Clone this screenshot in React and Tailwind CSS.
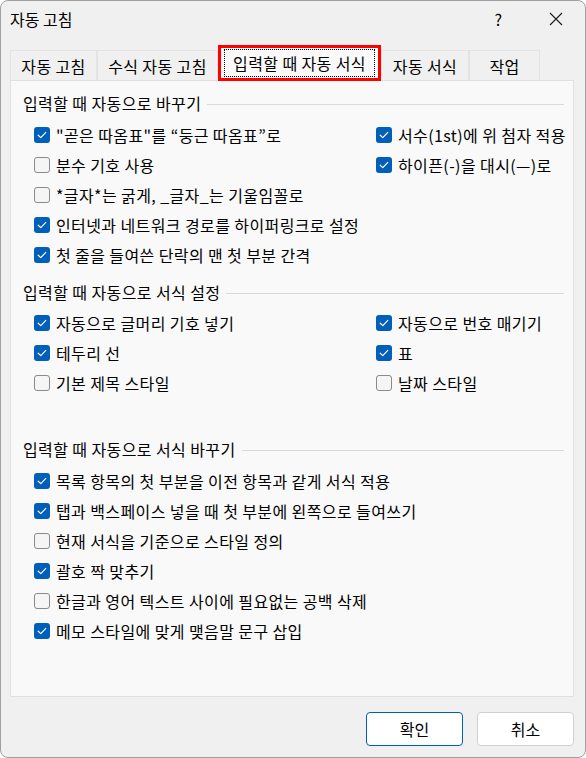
import React from 'react';

const FONT = "font-['Malgun_Gothic','Noto_Sans_CJK_KR',sans-serif]";
const TXT = 'text-[16px] leading-none text-black whitespace-nowrap tracking-[0.4px]';

function Box({ checked }) {
  if (checked) {
    return (
      <span className="w-[16px] h-[16px] rounded-[3px] bg-[#005fb8] flex items-center justify-center shrink-0">
        <svg width="10" height="8" viewBox="0 0 10 8" fill="none">
          <path d="M1.2 4.2 L3.8 6.6 L8.8 1.4" stroke="#ffffff" strokeWidth="1.2" strokeLinecap="round" strokeLinejoin="round" />
        </svg>
      </span>
    );
  }
  return <span className="w-[16px] h-[16px] rounded-[3px] border border-[#8a8a8a] bg-[#f5f5f5] shrink-0" />;
}

function Check({ label, checked, className = '' }) {
  return (
    <div className={`flex items-center gap-[6px] ${className}`}>
      <Box checked={checked} />
      <span className={TXT}>{label}</span>
    </div>
  );
}

function Row({ left, right }) {
  return (
    <div className="flex items-center pl-[23px] h-[30px]">
      <Check label={left[0]} checked={left[1]} className="w-[342px]" />
      {right && <Check label={right[0]} checked={right[1]} />}
    </div>
  );
}

function Header({ children }) {
  return (
    <div className="flex items-center gap-[6px] h-[20px] pl-[12px] pr-[9px]">
      <span className={TXT}>{children}</span>
      <div className="flex-1 h-px bg-[#dadada] mt-[3px]" />
    </div>
  );
}

const tabs = [
  { label: '자동 고침', w: 'w-[87px]' },
  { label: '수식 자동 고침', w: 'w-[121px]' },
  { label: '입력할 때 자동 서식', w: 'w-[163px]', active: true },
  { label: '자동 서식', w: 'w-[88px]' },
  { label: '작업', w: 'w-[71px]' },
];

export default function App() {
  return (
    <div className={`w-[586px] h-[758px] bg-[#f0f0f0] border border-[#a0a0a0] rounded-[8px] flex flex-col overflow-hidden ${FONT}`}>
      {/* title bar */}
      <div className="h-[36px] flex items-center pl-[9px] shrink-0">
        <span className="text-[16px] leading-none text-black">자동 고침</span>
        <span className="ml-auto mr-[47px] text-[16px] text-black leading-none">?</span>
        <span className="mr-[22px] flex items-center">
          <svg width="14" height="14" viewBox="0 0 14 14">
            <path d="M1 1 L13 13 M13 1 L1 13" stroke="#1a1a1a" strokeWidth="1.1" />
          </svg>
        </span>
      </div>

      {/* tabs */}
      <div className="flex items-end pl-[9px] h-[43px] shrink-0">
        {tabs.map((t) =>
          t.active ? (
            <div key={t.label} className={`${t.w} h-[36px] -mb-px border-[3px] border-[#ff0000] bg-[#f9f9f9] flex items-center justify-center relative z-10`}>
              <div className="w-[151px] h-[28px] border border-dotted border-black flex items-center justify-center">
                <span className={TXT}>{t.label}</span>
              </div>
            </div>
          ) : (
            <div key={t.label} className={`${t.w} h-[30px] border-t border-l border-r border-[#e3e3e3] bg-[#f0f0f0] flex items-center justify-center`}>
              <span className={TXT}>{t.label}</span>
            </div>
          )
        )}
      </div>

      {/* panel */}
      <div className="ml-[9px] mr-[11px] h-[617px] bg-[#f9f9f9] border border-[#e0e0e0] flex flex-col pt-[12px] shrink-0">
        <Header>입력할 때 자동으로 바꾸기</Header>
        <div className="flex flex-col mt-[7px]">
          <Row left={['"곧은 따옴표"를 “둥근 따옴표”로', true]} right={['서수(1st)에 위 첨자 적용', true]} />
          <Row left={['분수 기호 사용', false]} right={['하이픈(-)을 대시(—)로', true]} />
          <Row left={['*글자*는 굵게, _글자_는 기울임꼴로', false]} />
          <Row left={['인터넷과 네트워크 경로를 하이퍼링크로 설정', true]} />
          <Row left={['첫 줄을 들여쓴 단락의 맨 첫 부분 간격', true]} />
        </div>

        <div className="mt-[12px]">
          <Header>입력할 때 자동으로 서식 설정</Header>
        </div>
        <div className="flex flex-col mt-[6px]">
          <Row left={['자동으로 글머리 기호 넣기', true]} right={['자동으로 번호 매기기', true]} />
          <Row left={['테두리 선', true]} right={['표', true]} />
          <Row left={['기본 제목 스타일', false]} right={['날짜 스타일', false]} />
        </div>

        <div className="mt-[41px]">
          <Header>입력할 때 자동으로 서식 바꾸기</Header>
        </div>
        <div className="flex flex-col mt-[7px]">
          <Row left={['목록 항목의 첫 부분을 이전 항목과 같게 서식 적용', true]} />
          <Row left={['탭과 백스페이스 넣을 때 첫 부분에 왼쪽으로 들여쓰기', true]} />
          <Row left={['현재 서식을 기준으로 스타일 정의', false]} />
          <Row left={['괄호 짝 맞추기', true]} />
          <Row left={['한글과 영어 텍스트 사이에 필요없는 공백 삭제', false]} />
          <Row left={['메모 스타일에 맞게 맺음말 문구 삽입', true]} />
        </div>
      </div>

      {/* footer */}
      <div className="flex justify-end gap-[14px] pr-[11px] pt-[15px]">
        <button className="w-[97px] h-[34px] rounded-[4px] border border-[#005fb8] bg-white text-[16px] leading-none text-black">확인</button>
        <button className="w-[97px] h-[34px] rounded-[4px] border border-[#d0d0d0] bg-white text-[16px] leading-none text-black">취소</button>
      </div>
    </div>
  );
}
